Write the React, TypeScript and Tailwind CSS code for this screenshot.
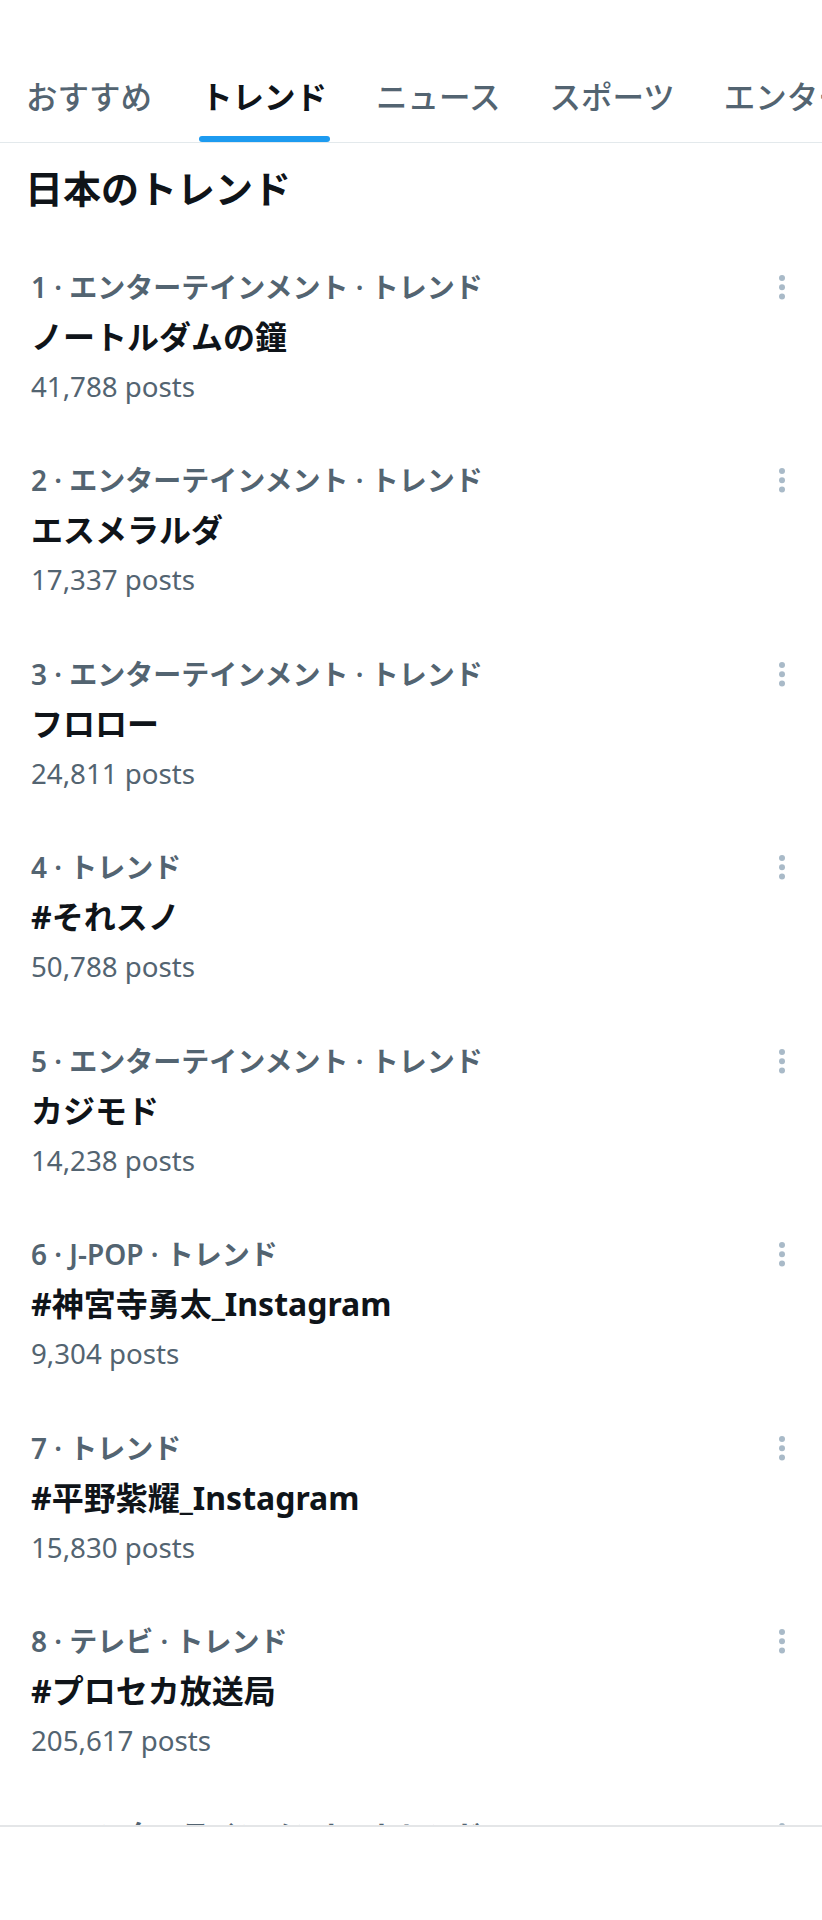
import React from 'react';

type Trend = {
  rank: number;
  category?: string;
  title: string;
  posts: string;
};

const tabs = ['おすすめ', 'トレンド', 'ニュース', 'スポーツ', 'エンターテインメント'];

const trends: Trend[] = [
  { rank: 1, category: 'エンターテインメント', title: 'ノートルダムの鐘', posts: '41,788' },
  { rank: 2, category: 'エンターテインメント', title: 'エスメラルダ', posts: '17,337' },
  { rank: 3, category: 'エンターテインメント', title: 'フロロー', posts: '24,811' },
  { rank: 4, title: '#それスノ', posts: '50,788' },
  { rank: 5, category: 'エンターテインメント', title: 'カジモド', posts: '14,238' },
  { rank: 6, category: 'J-POP', title: '#神宮寺勇太_Instagram', posts: '9,304' },
  { rank: 7, title: '#平野紫耀_Instagram', posts: '15,830' },
  { rank: 8, category: 'テレビ', title: '#プロセカ放送局', posts: '205,617' },
  { rank: 9, category: 'エンターテインメント', title: 'ディズニー', posts: '12,004' },
];

const MoreIcon: React.FC = () => (
  <svg width="6" height="25" viewBox="0 0 6 25" className="text-[#a9bac8]" fill="currentColor">
    <circle cx="3" cy="3" r="3" />
    <circle cx="3" cy="12.3" r="3" />
    <circle cx="3" cy="21.6" r="3" />
  </svg>
);

const TrendRow: React.FC<{ trend: Trend }> = ({ trend }) => {
  const meta = trend.category
    ? `${trend.rank} · ${trend.category} · トレンド`
    : `${trend.rank} · トレンド`;

  return (
    <div className="h-[193.5px] shrink-0 pt-[29.5px] pl-[31px] pr-[37px] flex justify-between items-start">
      <div className="flex flex-col">
        <div className="text-[28px] leading-[49px] font-semibold text-[#536471] whitespace-nowrap">{meta}</div>
        <div className="text-[32px] leading-[50px] font-bold text-[#0f1419] whitespace-nowrap">{trend.title}</div>
        <div className="text-[27.7px] leading-[49px] text-[#536471] whitespace-nowrap">{trend.posts} posts</div>
      </div>
      <div className="h-[49px] flex items-center">
        <MoreIcon />
      </div>
    </div>
  );
};

const App: React.FC = () => {
  return (
    <div className="w-[822px] h-[1920px] bg-white flex flex-col overflow-hidden font-['Noto_Sans','Noto_Sans_CJK_JP',sans-serif]">
      <div className="h-[1825px] shrink-0 overflow-hidden flex flex-col">
        {/* top spacer */}
        <div className="h-[52px] shrink-0" />

        {/* tabs */}
        <div className="h-[91px] shrink-0 border-b border-[#e3e9ec] flex overflow-hidden whitespace-nowrap pl-[1.5px]">
          {tabs.map((tab) => {
            const active = tab === 'トレンド';
            return (
              <div key={tab} className="relative h-full shrink-0 flex items-center px-[24.5px]">
                <span
                  className={
                    active
                      ? 'text-[31.5px] font-bold text-[#0f1419]'
                      : 'text-[31.5px] font-medium text-[#536471]'
                  }
                >
                  {tab}
                </span>
                {active && (
                  <div className="absolute bottom-0 left-[22px] right-[22px] h-[6px] rounded-full bg-[#1d9bf0]" />
                )}
              </div>
            );
          })}
        </div>

        {/* heading */}
        <div className="h-[90px] shrink-0 flex items-center px-[25px]">
          <h1 className="text-[38px] font-bold text-[#0f1419] whitespace-nowrap">日本のトレンド</h1>
        </div>

        {trends.map((t) => (
          <TrendRow key={t.rank} trend={t} />
        ))}
      </div>

      {/* bottom bar */}
      <div className="flex-1 border-t-2 border-[#e4e6e8] bg-white" />
    </div>
  );
};

export default App;
